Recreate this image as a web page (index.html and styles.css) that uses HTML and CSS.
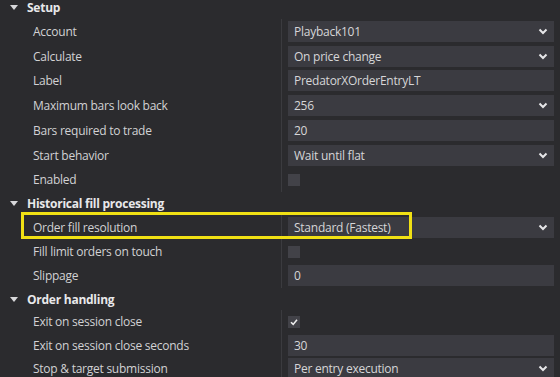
FILE: index.html
```html
<!DOCTYPE html>
<html lang="en">
<head>
  <meta charset="UTF-8" />
  <title>Strategy Properties</title>
  <link rel="stylesheet" href="styles.css">
</head>
<body>
  <div class="grid">
    <div class="cat setup">
      <div class="cat-head"><span class="tri"></span>Setup</div>
      <div class="cat-body">
        <div class="row"><div class="lbl">Account</div><div class="val"><div class="box">Playback101<svg class="chev" viewBox="0 0 10 7"><polyline points="1.5,1.5 5,5 8.5,1.5"/></svg></div></div></div>
        <div class="row"><div class="lbl">Calculate</div><div class="val"><div class="box">On price change<svg class="chev" viewBox="0 0 10 7"><polyline points="1.5,1.5 5,5 8.5,1.5"/></svg></div></div></div>
        <div class="row"><div class="lbl">Label</div><div class="val"><div class="box">PredatorXOrderEntryLT</div></div></div>
        <div class="row"><div class="lbl">Maximum bars look back</div><div class="val"><div class="box">256<svg class="chev" viewBox="0 0 10 7"><polyline points="1.5,1.5 5,5 8.5,1.5"/></svg></div></div></div>
        <div class="row"><div class="lbl">Bars required to trade</div><div class="val"><div class="box">20</div></div></div>
        <div class="row"><div class="lbl">Start behavior</div><div class="val"><div class="box">Wait until flat<svg class="chev" viewBox="0 0 10 7"><polyline points="1.5,1.5 5,5 8.5,1.5"/></svg></div></div></div>
        <div class="row"><div class="lbl">Enabled</div><div class="val"><span class="check"></span></div></div>
      </div>
    </div>

    <div class="cat fill">
      <div class="cat-head"><span class="tri"></span>Historical fill processing</div>
      <div class="cat-body">
        <div class="row"><div class="lbl">Order fill resolution</div><div class="val"><div class="box">Standard (Fastest)<svg class="chev" viewBox="0 0 10 7"><polyline points="1.5,1.5 5,5 8.5,1.5"/></svg></div></div></div>
        <div class="row"><div class="lbl">Fill limit orders on touch</div><div class="val"><span class="check"></span></div></div>
        <div class="row"><div class="lbl">Slippage</div><div class="val"><div class="box">0</div></div></div>
      </div>
    </div>

    <div class="cat orders">
      <div class="cat-head"><span class="tri"></span>Order handling</div>
      <div class="cat-body">
        <div class="row"><div class="lbl">Exit on session close</div><div class="val"><span class="check on"><svg viewBox="0 0 12 12"><polyline points="3,6.2 5.2,8.4 9,3.8"/></svg></span></div></div>
        <div class="row"><div class="lbl">Exit on session close seconds</div><div class="val"><div class="box">30</div></div></div>
        <div class="row"><div class="lbl">Stop &amp; target submission</div><div class="val"><div class="box">Per entry execution<svg class="chev" viewBox="0 0 10 7"><polyline points="1.5,1.5 5,5 8.5,1.5"/></svg></div></div></div>
      </div>
    </div>
  </div>

  <div class="highlight"></div>
</body>
</html>
```

FILE: styles.css
```css
html, body { margin: 0; height: 100%; }
body { background: #2b2b2e; font-family: "Open Sans", sans-serif; font-size: 12px; letter-spacing: -0.25px; color: #d2d2d4; overflow: hidden; position: relative; }
.grid { margin-top: -4px; }
.cat-head { height: 23px; display: flex; align-items: center; font-weight: bold; color: #e8e8ea; padding-left: 10px; }
.orders .cat-head { height: 22px; }
.tri { width: 0; height: 0; border-left: 4px solid transparent; border-right: 4px solid transparent; border-top: 5px solid #d8d8da; margin-right: 9px; }
.cat-body { position: relative; }
.cat-body::after { content: ""; position: absolute; left: 281px; top: 0; bottom: 0; width: 1px; background: #3b3b3f; }
.row { height: 24.5px; display: grid; grid-template-columns: 288px 1fr; align-items: center; }
.setup .row { height: 24.75px; }
.fill .row { height: 24.25px; }
.orders .row { height: 23.5px; }
.lbl { padding-left: 33px; white-space: nowrap; }
.val { padding-right: 6px; display: flex; align-items: center; }
.box { flex: 1; height: 21px; background: #3b3b41; display: flex; align-items: center; padding: 0 6px; color: #d6d6d8; position: relative; }
.chev { width: 10px; height: 7px; position: absolute; right: 6px; top: 7px; }
.chev polyline { fill: none; stroke: #e6e6e8; stroke-width: 2; }
.check { width: 12px; height: 12px; background: #424248; display: block; }
.check svg { width: 12px; height: 12px; display: block; }
.check svg polyline { fill: none; stroke: #eeeeee; stroke-width: 1.6; }
.highlight { position: absolute; left: 21px; top: 212px; width: 385px; height: 21px; border: 3.5px solid #f0e014; }
```
